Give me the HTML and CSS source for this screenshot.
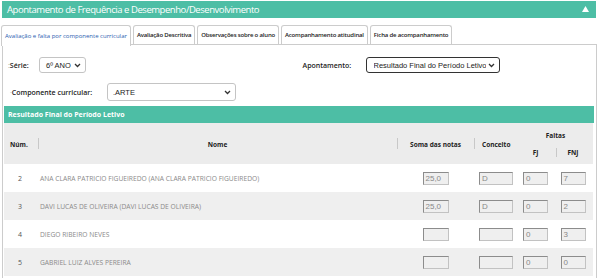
FILE: index.html
```html
<!DOCTYPE html>
<html lang="pt">
<head>
    <meta charset="UTF-8">
    <meta name="viewport" content="width=device-width, initial-scale=1.0">
    <title>Apontamento</title>
    <link rel="stylesheet" href="styles.css">
</head>
<body>
    <div class="panel-header">
        <span class="panel-title">Apontamento de Frequência e Desempenho/Desenvolvimento</span>
        <svg class="collapse-icon" width="7" height="6" viewBox="0 0 7 6"><polygon points="3.5,0 7,6 0,6" fill="#fff"/></svg>
    </div>

    <div class="tabs">
        <div class="tab active">Avaliação e falta por componente curricular</div>
        <div class="tab">Avaliação Descritiva</div>
        <div class="tab">Observações sobre o aluno</div>
        <div class="tab">Acompanhamento atitudinal</div>
        <div class="tab">Ficha de acompanhamento</div>
    </div>

    <div class="tab-content">
        <div class="form-row">
            <div class="form-half">
                <label class="field-label serie-label"><span class="req">:</span>Série:</label>
                <div class="fake-select serie-select">
                    <span>6º ANO</span>
                    <svg width="7" height="5" viewBox="0 0 7 5"><polyline points="1,1 3.5,3.5 6,1" fill="none" stroke="#333" stroke-width="1.3"/></svg>
                </div>
            </div>
            <div class="form-half">
                <label class="field-label apont-label">Apontamento:</label>
                <div class="fake-select apont-select">
                    <span class="clip">Resultado Final do Período Letivo</span>
                    <svg width="7" height="5" viewBox="0 0 7 5"><polyline points="1,1 3.5,3.5 6,1" fill="none" stroke="#333" stroke-width="1.3"/></svg>
                </div>
            </div>
        </div>

        <div class="form-row second">
            <label class="field-label comp-label"><span class="req">·</span>Componente curricular:</label>
            <div class="fake-select comp-select">
                <span>.ARTE</span>
                <svg width="7" height="5" viewBox="0 0 7 5"><polyline points="1,1 3.5,3.5 6,1" fill="none" stroke="#333" stroke-width="1.3"/></svg>
            </div>
        </div>

        <div class="result-bar">Resultado Final do Período Letivo</div>

        <table class="grade-table">
            <colgroup>
                <col class="c-num">
                <col class="c-nome">
                <col class="c-soma">
                <col class="c-conc">
                <col class="c-fj">
                <col class="c-fnj">
            </colgroup>
            <thead>
                <tr class="head-top">
                    <th rowspan="2" class="th-num">Núm.</th>
                    <th rowspan="2" class="sep">Nome</th>
                    <th rowspan="2" class="sep">Soma das notas</th>
                    <th rowspan="2" class="sep th-left">Conceito</th>
                    <th colspan="2" class="th-faltas">Faltas</th>
                </tr>
                <tr class="head-bottom">
                    <th>FJ</th>
                    <th class="sep sep-small">FNJ</th>
                </tr>
            </thead>
            <tbody>
                <tr>
                    <td class="num">2</td>
                    <td class="nome">ANA CLARA PATRICIO FIGUEIREDO (ANA CLARA PATRICIO FIGUEIREDO)</td>
                    <td><span class="box soma">25,0</span></td>
                    <td><span class="box conc">D</span></td>
                    <td><span class="box small">0</span></td>
                    <td><span class="box small">7</span></td>
                </tr>
                <tr class="odd">
                    <td class="num">3</td>
                    <td class="nome">DAVI LUCAS DE OLIVEIRA (DAVI LUCAS DE OLIVEIRA)</td>
                    <td><span class="box soma">25,0</span></td>
                    <td><span class="box conc">D</span></td>
                    <td><span class="box small">0</span></td>
                    <td><span class="box small">2</span></td>
                </tr>
                <tr>
                    <td class="num">4</td>
                    <td class="nome">DIEGO RIBEIRO NEVES</td>
                    <td><span class="box soma"></span></td>
                    <td><span class="box conc"></span></td>
                    <td><span class="box small">0</span></td>
                    <td><span class="box small">3</span></td>
                </tr>
                <tr class="odd">
                    <td class="num">5</td>
                    <td class="nome">GABRIEL LUIZ ALVES PEREIRA</td>
                    <td><span class="box soma"></span></td>
                    <td><span class="box conc"></span></td>
                    <td><span class="box small">0</span></td>
                    <td><span class="box small">0</span></td>
                </tr>
            </tbody>
        </table>
    </div>
</body>
</html>
```

FILE: styles.css
```css
body {
    margin: 0;
    font-family: "Open Sans", "Liberation Sans", sans-serif;
    background: #fff;
    overflow: hidden;
}

.panel-header {
    margin: 1px 4px 0 2px;
    height: 17px;
    background: #4dbea5;
    color: #fff;
    display: flex;
    align-items: center;
    justify-content: space-between;
    padding: 0 7px 0 5px;
}

.panel-title {
    font-size: 9.5px;
    letter-spacing: -0.45px;
}

.collapse-icon {
    margin-top: -1px;
}

.tabs {
    display: flex;
    gap: 2px;
    margin: 7px 0 0 1px;
    height: 19px;
}

.tab {
    border: 1px solid #ccc;
    border-bottom: none;
    border-radius: 3px 3px 0 0;
    padding: 0 3px;
    font-size: 6px;
    font-weight: 600;
    letter-spacing: -0.18px;
    color: #222;
    display: flex;
    align-items: center;
    background: #fff;
}

.tab.active {
    color: #2a5db0;
    font-weight: 400;
    letter-spacing: 0;
    height: 20px;
    position: relative;
    z-index: 1;
}

.tab-content {
    border: 1px solid #ccc;
    margin: 0 3px 0 2px;
    height: 300px;
}

.form-row {
    display: flex;
    align-items: center;
    margin-top: 12px;
    height: 16px;
}

.form-row.second {
    margin-top: 10px;
    height: 18px;
}

.form-half {
    display: flex;
    align-items: center;
    width: 297px;
}

.field-label {
    font-size: 7px;
    font-weight: 600;
    color: #222;
}

.req {
    color: #999;
    font-weight: 400;
}

.serie-label {
    margin-left: 5px;
    width: 31px;
}

.apont-label {
    width: 63px;
    margin-left: 3px;
}

.comp-label {
    margin-left: 7px;
    width: 97px;
}

.fake-select {
    display: flex;
    align-items: center;
    justify-content: space-between;
    border: 1px solid #c4c4c4;
    border-radius: 3px;
    background: #fff;
    font-family: "Liberation Sans", Arial, sans-serif;
    font-size: 7.5px;
    color: #222;
    box-sizing: border-box;
    padding: 0 4px 0 6px;
}

.serie-select {
    width: 47px;
    height: 16px;
}

.apont-select {
    width: 134px;
    height: 16px;
    border-color: #333;
    padding-left: 7px;
}

.apont-select .clip {
    width: 112px;
    overflow: hidden;
    white-space: nowrap;
}

.comp-select {
    width: 129px;
    height: 18px;
    padding-left: 5px;
}

.result-bar {
    margin: 5px 2px 0 1px;
    height: 17px;
    background: #4dbea5;
    color: #fff;
    font-size: 7px;
    font-weight: 700;
    display: flex;
    align-items: center;
    padding-left: 4px;
}

.grade-table {
    margin: 0 2px 0 1px;
    width: 589px;
    border-collapse: collapse;
    table-layout: fixed;
    font-size: 6.5px;
}

.c-num { width: 34px; }
.c-soma { width: 77px; }
.c-conc { width: 44px; }
.c-fj { width: 35px; }
.c-fnj { width: 40px; }

.grade-table thead tr {
    background: #ececec;
}

.grade-table th {
    font-weight: 700;
    color: #222;
    padding: 0;
    text-align: center;
    position: relative;
}

.head-top {
    height: 22px;
}

.head-bottom {
    height: 19px;
}

.head-top th[rowspan] {
    padding-top: 2px;
}

.th-num {
    text-align: left !important;
    padding-left: 6px !important;
}

.th-left {
    text-align: left !important;
    padding-left: 8px !important;
}

.th-faltas {
    vertical-align: middle;
    padding-top: 2px !important;
}

.head-bottom th {
    vertical-align: top;
    padding-top: 3px;
}

.sep::before {
    content: "";
    position: absolute;
    left: 0;
    top: 15px;
    height: 11px;
    border-left: 1px solid #c8c8c8;
}

.sep-small::before {
    left: 3px;
    top: 3px;
    height: 9px;
}

.grade-table tbody tr {
    height: 28px;
    background: #fff;
}

.grade-table tbody tr.odd {
    background: #efefef;
}

.grade-table td {
    padding: 0;
    text-align: center;
    color: #777;
}

.grade-table td.num {
    color: #555;
    font-size: 7px;
    text-align: left;
    padding-left: 14px;
}

.grade-table td.nome {
    text-align: left;
    padding-left: 2px;
    font-size: 6.7px;
    color: #8a8a8a;
}

.box {
    display: inline-block;
    vertical-align: middle;
    height: 13px;
    box-sizing: border-box;
    background: #efefef;
    border: 1px solid #c2c2c2;
    border-top-color: #8c8c8c;
    border-left-color: #8c8c8c;
    font-family: "Liberation Sans", Arial, sans-serif;
    font-size: 8px;
    line-height: 11px;
    color: #888;
    text-align: left;
    padding-left: 2px;
}

.box.soma {
    width: 26px;
}

.box.conc {
    width: 34px;
}

.box.small {
    width: 25px;
}
```
